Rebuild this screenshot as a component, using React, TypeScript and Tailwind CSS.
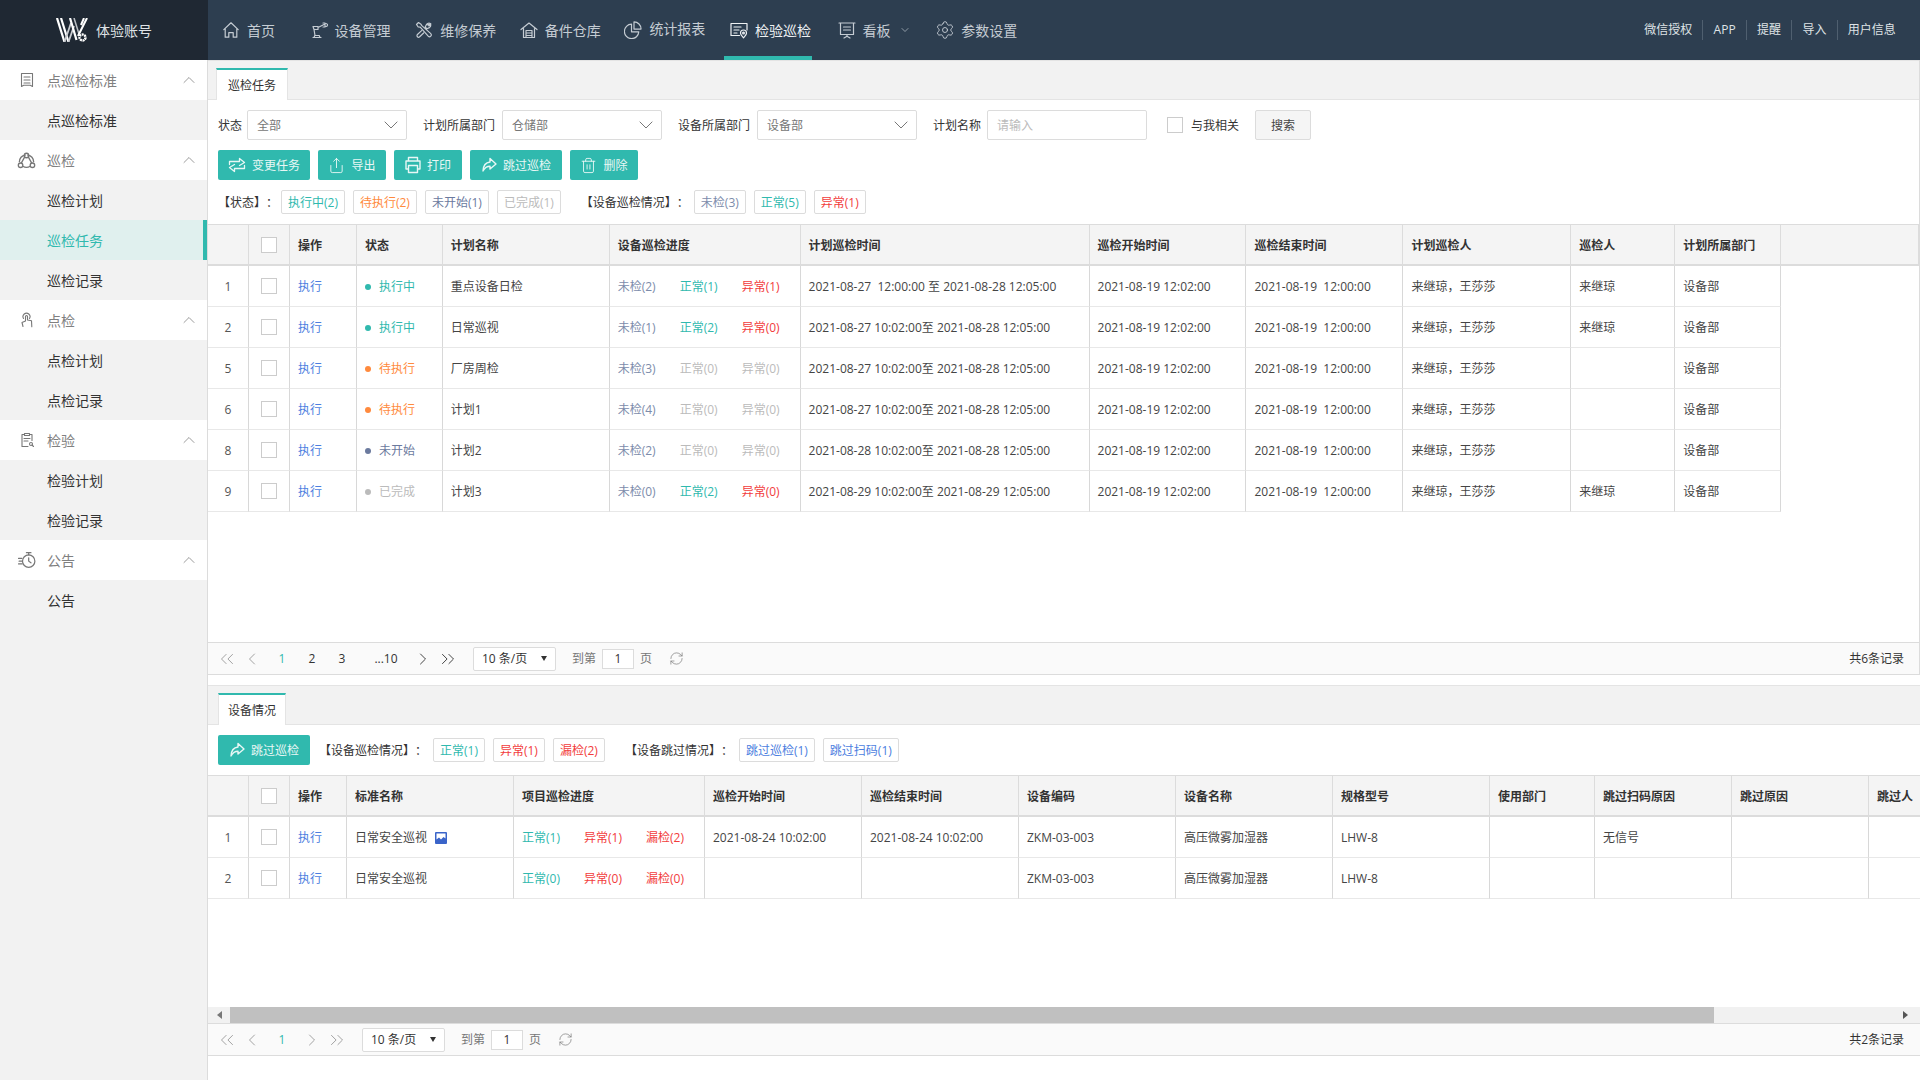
import { ChevronDown, ChevronLeft, ChevronRight, ChevronUp, ChevronsLeft, ChevronsRight, RefreshCw, Settings, Share, Trash2 } from "lucide-react";
import type { ReactNode } from "react";

const navIcon = { width: 18, height: 18, viewBox: "0 0 18 18", fill: "none", stroke: "currentColor", strokeWidth: 1.2, strokeLinejoin: "round" as const, strokeLinecap: "round" as const };
const sideIcon = { width: 16, height: 16, viewBox: "0 0 16 16", fill: "none", stroke: "#777", strokeWidth: 1.1, strokeLinejoin: "round" as const, strokeLinecap: "round" as const };

const HomeIcon = () => (
  <svg {...navIcon}><path d="M1.8 8.6 9 1.8l7.2 6.8M3.2 7.4V16.2h3.6v-4.6h4.4v4.6h3.6V7.4" /></svg>
);
const RobotIcon = () => (
  <svg {...navIcon}><path d="M2 16.5h8M3 16.5l.8-2h4.4l.8 2M4 14.5 3 8.5M2 5.5h5v3H3zM7 6.5l6-3M12 2h2v4h-2M15 2.5a2 2 0 0 1 1.5 1M15 5.5a2 2 0 0 0 1.5-1" /></svg>
);
const ToolsIcon = () => (
  <svg {...navIcon}><path d="M6 3.2 3.5 1.5 1.5 3.5l1.7 2.5 2 .2 8 9a1.8 1.8 0 0 0 2.6-2.6l-9-8zM15.8 2.7a3.4 3.4 0 0 0-4.3.8L10.2 6l1.8 1.8 2.4-1.2a3.3 3.3 0 0 0 1.4-2.9l-2 1.1-1-1zM6.6 9.6l-4.4 4.2a1.6 1.6 0 0 0 2.2 2.2L8.6 12" /></svg>
);
const StoreIcon = () => (
  <svg {...navIcon}><path d="M1 8.5 9 2l8 6.5M3.5 7.5v9h11v-9M6 9.5h6v7H6zM6 12h6M6 14.5h6" /></svg>
);
const PieIcon = () => (
  <svg {...navIcon}><path d="M7.5 3.2a7.2 7.2 0 1 0 7.3 7.6H7.5zM10 .9a7 7 0 0 1 7 7.2h-7z" /></svg>
);
const InspectIcon = () => (
  <svg {...navIcon}><path d="M17 9V2.5H1v12h8.5M4 6h7M4 9h5M4 12h3" /><path d="M13.5 16.8c-2-2.2-3-3.4-3-4.8a3 3 0 0 1 6 0c0 1.4-1 2.6-3 4.8z" /><circle cx="13.5" cy="12" r=".9" /></svg>
);
const BoardIcon = () => (
  <svg {...navIcon}><path d="M1 2h16M2.5 2v11.5h13V2M5.5 6h7M5.5 9h7M9 13.5v2M6 17l3-1.8 3 1.8" /></svg>
);

const SwapIcon = () => (
  <svg width="18" height="16" viewBox="0 0 18 16" fill="none" stroke="currentColor" strokeWidth="1.3" strokeLinejoin="round" strokeLinecap="round">
    <path d="M1.500 7.500V4.500h10V1.500l5 4-5 3" />
    <path d="M16.500 8.500v3h-10v3l-5-4 5-3" />
  </svg>
);
const PrintIcon = () => (
  <svg width="16" height="18" viewBox="0 0 16 18" fill="none" stroke="currentColor" strokeWidth="1.4" strokeLinejoin="round">
    <path d="M3.500 5V1.500h9V5M3.500 13H1V5h14v8h-2.500M3.500 9.500h9v7h-9z" />
  </svg>
);
const SkipIcon = () => (
  <svg width="16" height="16" viewBox="0 0 16 16" fill="none" stroke="currentColor" strokeWidth="1.4" strokeLinejoin="round">
    <path d="M9 1.500 15 7l-6 5V9.200c-3 0-5.200 1.300-7 4.800C2.200 9 4.500 5.500 9 5z" />
  </svg>
);

const DocSideIcon = () => (
  <svg {...sideIcon}><path d="M2.500 1.500h11v13l-2.200-1.200H4.700L2.500 14.500zM5 5h6M5 8h6M5 11h6" /></svg>
);
const TriadIcon = () => (
  <svg {...sideIcon} width="19" height="19"><circle cx="8" cy="3.800" r="1.900" /><circle cx="3" cy="12" r="1.900" /><circle cx="13" cy="12" r="1.900" /><path d="M6.500 5 3.600 10.200M9.500 5l2.900 5.200M4.900 12.800a6 6 0 0 0 6.200 0M7 3.500a6 6 0 0 0-5 5.500M9 3.500A6 6 0 0 1 14 9" /></svg>
);
const HandIcon = () => (
  <svg {...sideIcon}><path d="M4.500 6.500a3.500 3.500 0 1 1 6 0M6.500 9V4.500a1 1 0 0 1 2 0V8l4 .8.300 6M6.500 9 3 10.500l1 4" /></svg>
);
const ClipIcon = () => (
  <svg {...sideIcon}><path d="M5.500 2.500H3v12h6M10.500 2.500H13v6M5.500 1.500h5v2h-5zM5 6.500h6M5 9h4" /><circle cx="12" cy="12" r="1.500" /><path d="m13 13 1.500 1.500" /></svg>
);
const TimerIcon = () => (
  <svg {...sideIcon} width="18" height="18"><circle cx="9.500" cy="9" r="5.500" /><path d="M7.500 1.500h4M9.500 1.500v2M9.500 6v3l2 1.500M.5 6.500h3M1 9h2.500M.5 11.500h3" /></svg>
);

function Logo() {
  return (
    <svg width="32" height="24" viewBox="0 0 32 24" fill="none">
      <path d="M1 0 8.500 24M5 0l7.500 24" stroke="#fff" strokeWidth="2.200" />
      <path d="M8.500 24 15 5M12.500 24l5.500-16" stroke="#c9ccd0" strokeWidth="1.800" />
      <path d="M14 0l6.500 22" stroke="#fff" strokeWidth="2.200" />
      <path d="M18 0l5 16" stroke="#b9bdc2" strokeWidth="1.600" />
      <path d="M22 18 31 0M25 7l3-7" stroke="#fff" strokeWidth="2" />
      <circle cx="26.500" cy="19.500" r="3" fill="#1f2833" stroke="#fff" strokeWidth="2.400" strokeDasharray="2 .6" />
    </svg>
  );
}

const sideGroups: { title: string; icon: ReactNode; items: string[] }[] = [
  { title: "点巡检标准", icon: <DocSideIcon />, items: ["点巡检标准"] },
  { title: "巡检", icon: <TriadIcon />, items: ["巡检计划", "巡检任务", "巡检记录"] },
  { title: "点检", icon: <HandIcon />, items: ["点检计划", "点检记录"] },
  { title: "检验", icon: <ClipIcon />, items: ["检验计划", "检验记录"] },
  { title: "公告", icon: <TimerIcon />, items: ["公告"] },
];

function Sidebar() {
  return (
    <aside className="w-[208px] shrink-0 border-r border-[#dcdcdc] bg-[#f2f2f2]">
      {sideGroups.map((group) => (
        <div key={group.title}>
          <div className="flex h-10 items-center bg-white pr-2 text-[14px] text-[#808080]">
            <span className="flex w-[47px] justify-center pl-[6px]">{group.icon}</span>
            <span className="flex-1">{group.title}</span>
            <ChevronUp size={20} strokeWidth={1} color="#888" />
          </div>
          {group.items.map((item) =>
            item === "巡检任务" ? (
              <div key={item} className="flex h-10 items-center border-r-[4px] border-[#30b9ae] bg-[#e0f0ee] pl-[47px] text-[14px] text-[#30b9ae]">
                {item}
              </div>
            ) : (
              <div key={item} className="flex h-10 items-center pl-[47px] text-[14px] text-[#333]">
                {item}
              </div>
            )
          )}
        </div>
      ))}
    </aside>
  );
}

function Header() {
  return (
    <header className="flex h-[60px] shrink-0 bg-[#2d3e50] text-[14px] text-[#c5ccd3]">
      <div className="flex w-[208px] shrink-0 items-center gap-2 bg-[#1f2833] pl-[56px] text-[#dfe2e5]">
        <Logo />
        <span>体验账号</span>
      </div>
      <nav className="flex flex-1 items-center gap-[16.6px] whitespace-nowrap pl-2">
        <a className="flex h-[60px] w-[72px] items-center gap-[7px] pl-[6px]"><HomeIcon /><span>首页</span></a>
        <a className="flex h-[60px] w-[88px] items-center gap-[6px] pl-[6px]"><RobotIcon /><span>设备管理</span></a>
        <a className="flex h-[60px] w-[88px] items-center gap-[7px] pl-[6px]"><ToolsIcon /><span>维修保养</span></a>
        <a className="flex h-[60px] w-[88px] items-center gap-[7px] pl-[6px]"><StoreIcon /><span>备件仓库</span></a>
        <a className="flex h-[60px] w-[88px] items-center gap-[7px] pl-[6px]"><PieIcon /><span className="mb-[4px]">统计报表</span></a>
        <a className="ml-[1px] flex h-[60px] w-[88px] items-center gap-[7px] border-b-[4px] border-[#30b9ae] pl-[6px] pt-[4px] text-[#eef1f3]"><InspectIcon /><span>检验巡检</span></a>
        <a className="ml-[3px] flex h-[60px] w-[80px] items-center gap-[7px] pl-[6px]"><BoardIcon /><span>看板</span><ChevronDown size={12} strokeWidth={1.3} className="ml-[1px] shrink-0" /></a>
        <a className="flex h-[60px] w-[92px] items-center gap-[6px] pl-[7px]"><Settings size={20} strokeWidth={1.1} /><span>参数设置</span></a>
      </nav>
      <div className="flex items-center pr-[14px] text-[12px] text-[#dfe3e6]">
        <a className="flex h-5 items-center border-r border-[#4f5f6f] px-[10.200px]">微信授权</a>
        <a className="flex h-5 items-center border-r border-[#4f5f6f] px-[10.200px]">APP</a>
        <a className="flex h-5 items-center border-r border-[#4f5f6f] px-[10.200px]">提醒</a>
        <a className="flex h-5 items-center border-r border-[#4f5f6f] px-[10.200px]">导入</a>
        <a className="flex h-5 items-center px-[10.200px]">用户信息</a>
      </div>
    </header>
  );
}

function TabBar({ title, tabClass }: { title: string; tabClass: string }) {
  return (
    <div className="flex h-10 shrink-0 items-end border-b border-t border-[#e4e4e4] bg-[#f2f2f2]">
      <div className={`-mb-px flex h-8 items-center justify-center border-x border-t-2 border-x-[#e4e4e4] border-t-[#30b9ae] bg-white pt-[2px] text-[12px] text-[#333] ${tabClass}`}>
        {title}
      </div>
    </div>
  );
}

function Tag({ color, children }: { color: string; children: ReactNode }) {
  return <span className={`flex h-6 items-center rounded-[2px] border border-[#dcdcdc] px-[6px] pt-[2px] text-[12px] ${color}`}>{children}</span>;
}

function Select({ value }: { value: string }) {
  return (
    <div className="flex h-[30px] w-[160px] items-center justify-between rounded-[2px] border border-[#dcdcdc] pl-[9px] pr-2 text-[#777]">
      <span className="pt-[2px]">{value}</span>
      <svg width="14" height="8" viewBox="0 0 14 8" fill="none" stroke="#777" strokeWidth="1"><path d="m.7.7 6.300 6.300L13.300.7" /></svg>
    </div>
  );
}

function ActionButton({ w, icon, label }: { w: string; icon: ReactNode; label: string }) {
  return (
    <button className={`flex h-[30px] items-center justify-center gap-[6px] rounded-[2px] bg-[#30b9ae] text-[12px] text-[#e8f7f5] ${w}`}>
      {icon}
      <span className="pt-[2px]">{label}</span>
    </button>
  );
}

function Checkbox() {
  return <span className="block size-4 border border-[#ccc] bg-white" />;
}

const CW1 = ["w-[41px]", "w-[41px]", "w-[67px]", "w-[86px]", "w-[167px]", "w-[191px]", "w-[289px]", "w-[157px]", "w-[157px]", "w-[168px]", "w-[104px]", "w-[106px]", "w-[138px]"];
const HEAD1 = ["操作", "状态", "计划名称", "设备巡检进度", "计划巡检时间", "巡检开始时间", "巡检结束时间", "计划巡检人", "巡检人", "计划所属部门"];

type Row1 = { no: number; status: string; dot: string; text: string; name: string; un: string; ok: string; bad: string; dim?: boolean; time: string; who: string };
const rows1: Row1[] = [
  { no: 1, status: "执行中", dot: "bg-[#30b9ae]", text: "text-[#30b9ae]", name: "重点设备日检", un: "未检(2)", ok: "正常(1)", bad: "异常(1)", time: "2021-08-27  12:00:00 至 2021-08-28 12:05:00", who: "来继琼" },
  { no: 2, status: "执行中", dot: "bg-[#30b9ae]", text: "text-[#30b9ae]", name: "日常巡视", un: "未检(1)", ok: "正常(2)", bad: "异常(0)", time: "2021-08-27 10:02:00至 2021-08-28 12:05:00", who: "来继琼" },
  { no: 5, status: "待执行", dot: "bg-[#ff8a3d]", text: "text-[#ff8a3d]", name: "厂房周检", un: "未检(3)", ok: "正常(0)", bad: "异常(0)", dim: true, time: "2021-08-27 10:02:00至 2021-08-28 12:05:00", who: "" },
  { no: 6, status: "待执行", dot: "bg-[#ff8a3d]", text: "text-[#ff8a3d]", name: "计划1", un: "未检(4)", ok: "正常(0)", bad: "异常(0)", dim: true, time: "2021-08-27 10:02:00至 2021-08-28 12:05:00", who: "" },
  { no: 8, status: "未开始", dot: "bg-[#6b7a9e]", text: "text-[#6b7a9e]", name: "计划2", un: "未检(2)", ok: "正常(0)", bad: "异常(0)", dim: true, time: "2021-08-28 10:02:00至 2021-08-28 12:05:00", who: "" },
  { no: 9, status: "已完成", dot: "bg-[#bbb]", text: "text-[#bbb]", name: "计划3", un: "未检(0)", ok: "正常(2)", bad: "异常(0)", time: "2021-08-29 10:02:00至 2021-08-29 12:05:00", who: "来继琼" },
];

const thBox = "h-[41px] border-b-2 border-r border-[#dcdcdc] bg-[#f4f4f4] pl-2 text-left font-bold text-[#333]";
const th = `${thBox} pt-[2px]`;
const td = "h-[41px] border-b border-r border-b-[#e8e8e8] border-r-[#d8d8d8] pl-2 pt-[2px] text-[#444]";
const idx = "h-[41px] border-b border-r border-b-[#e8e8e8] border-r-[#d8d8d8] pt-[2px] text-center text-[#555]";
const chk = "h-[41px] border-b border-r border-b-[#e8e8e8] border-r-[#d8d8d8]";

function TaskTable() {
  return (
    <table className="table-fixed border-separate border-spacing-0 text-[12px]">
      <colgroup>{CW1.map((c, i) => <col key={i} className={c} />)}</colgroup>
      <thead>
        <tr>
          <th className={thBox} />
          <th className={thBox}><span className="flex justify-center pr-2"><Checkbox /></span></th>
          {HEAD1.map((h) => <th key={h} className={th}>{h}</th>)}
          <th className={thBox} />
        </tr>
      </thead>
      <tbody>
        {rows1.map((r) => (
          <tr key={r.no}>
            <td className={idx}>{r.no}</td>
            <td className={chk}><span className="flex justify-center"><Checkbox /></span></td>
            <td className={td}><span className="text-[#4c7ee0]">执行</span></td>
            <td className={td}>
              <span className={`flex items-center gap-[8px] ${r.text}`}><i className={`size-[6px] rounded-full ${r.dot}`} />{r.status}</span>
            </td>
            <td className={td}>{r.name}</td>
            <td className={td}>
              <span className="flex">
                <span className="w-[62px] text-[#7c8cab]">{r.un}</span>
                <span className={`w-[62px] ${r.dim ? "text-[#bbb]" : "text-[#30b9ae]"}`}>{r.ok}</span>
                <span className={r.dim ? "text-[#bbb]" : "text-[#f23c3c]"}>{r.bad}</span>
              </span>
            </td>
            <td className={`${td} whitespace-pre`}>{r.time}</td>
            <td className={td}>2021-08-19 12:02:00</td>
            <td className={`${td} whitespace-pre`}>2021-08-19  12:00:00</td>
            <td className={td}>来继琼，王莎莎</td>
            <td className={td}>{r.who}</td>
            <td className={td}>设备部</td>
          </tr>
        ))}
      </tbody>
    </table>
  );
}

const CW2 = ["w-[41px]", "w-[41px]", "w-[57px]", "w-[167px]", "w-[191px]", "w-[157px]", "w-[157px]", "w-[157px]", "w-[157px]", "w-[157px]", "w-[105px]", "w-[137px]", "w-[137px]", "w-[137px]"];
const HEAD2 = ["操作", "标准名称", "项目巡检进度", "巡检开始时间", "巡检结束时间", "设备编码", "设备名称", "规格型号", "使用部门", "跳过扫码原因", "跳过原因", "跳过人"];

function DeviceTable() {
  const rows = [
    { no: 1, img: true, a: "正常(1)", b: "异常(1)", c: "漏检(2)", t: "2021-08-24 10:02:00", why: "无信号" },
    { no: 2, img: false, a: "正常(0)", b: "异常(0)", c: "漏检(0)", t: "", why: "" },
  ];
  return (
    <table className="w-[1798px] table-fixed border-separate border-spacing-0 text-[12px]">
      <colgroup>{CW2.map((c, i) => <col key={i} className={c} />)}</colgroup>
      <thead>
        <tr>
          <th className={thBox} />
          <th className={thBox}><span className="flex justify-center pr-2"><Checkbox /></span></th>
          {HEAD2.map((h) => <th key={h} className={th}>{h}</th>)}
        </tr>
      </thead>
      <tbody>
        {rows.map((r) => (
          <tr key={r.no}>
            <td className={idx}>{r.no}</td>
            <td className={chk}><span className="flex justify-center"><Checkbox /></span></td>
            <td className={td}><span className="text-[#4c7ee0]">执行</span></td>
            <td className={td}>
              <span className="flex items-center gap-2">
                日常安全巡视
                {r.img && (
                  <svg width="12" height="12" viewBox="0 0 12 12">
                    <rect width="12" height="12" rx="1" fill="#3a64c9" />
                    <path d="M1.500 1.500h9v5l-2-1.500L6 7.500 4 5.500l-2.500 2z" fill="#fff" />
                  </svg>
                )}
              </span>
            </td>
            <td className={td}>
              <span className="flex">
                <span className="w-[62px] text-[#30b9ae]">{r.a}</span>
                <span className="w-[62px] text-[#f23c3c]">{r.b}</span>
                <span className="text-[#f23c3c]">{r.c}</span>
              </span>
            </td>
            <td className={td}>{r.t}</td>
            <td className={td}>{r.t}</td>
            <td className={td}>ZKM-03-003</td>
            <td className={td}>高压微雾加湿器</td>
            <td className={td}>LHW-8</td>
            <td className={td} />
            <td className={td}>{r.why}</td>
            <td className={td} />
            <td className={td} />
          </tr>
        ))}
      </tbody>
    </table>
  );
}

function Pager({ total, multi }: { total: string; multi: boolean }) {
  const nextColor = multi ? "#333" : "#999";
  return (
    <div className={`flex h-[33px] shrink-0 items-center border-y border-[#dcdcdc] bg-[#fafafa] pl-[6px] text-[12px] text-[#333] ${multi ? "pr-[15px]" : "pr-[16px]"}`}>
      <span className="flex w-[25px] justify-center"><ChevronsLeft size={22} strokeWidth={1} color="#999" /></span>
      <span className="flex w-[25px] justify-center"><ChevronLeft size={20} strokeWidth={1.1} color="#999" /></span>
      <span className="ml-[3px] w-[30px] text-center text-[#30b9ae]">1</span>
      {multi && <span className="w-[30px] text-center">2</span>}
      {multi && <span className="w-[30px] text-center">3</span>}
      {multi && <span className="ml-[15px] w-[28px] text-center">...10</span>}
      <span className={`flex w-[25px] justify-center ${multi ? "ml-[10px]" : "ml-[2px]"}`}><ChevronRight size={20} strokeWidth={1.1} color={nextColor} /></span>
      <span className="flex w-[25px] justify-center"><ChevronsRight size={22} strokeWidth={1} color={nextColor} /></span>
      <div className="ml-[13px] flex h-6 w-[83px] items-center justify-between rounded-[2px] border border-[#dcdcdc] bg-white pl-2 pr-2">
        <span>10 条/页</span>
        <i className="border-x-[3.500px] border-t-[5px] border-x-transparent border-t-[#333]" />
      </div>
      <span className="ml-[16px] text-[#777]">到第</span>
      <span className="ml-[6px] flex h-5 w-8 items-center justify-center border border-[#dcdcdc] bg-white">1</span>
      <span className="ml-[6px] text-[#777]">页</span>
      <RefreshCw size={15} strokeWidth={1.1} color="#777" className="ml-[17px]" />
      <span className="ml-auto">{total}</span>
    </div>
  );
}

export default function App() {
  return (
    <div className="flex h-screen w-[1920px] flex-col overflow-hidden bg-white font-['Open_Sans','Noto_Sans_CJK_SC',sans-serif] text-[12px] text-[#333] [text-spacing-trim:space-all]">
      <Header />
      <div className="flex min-h-0 flex-1">
        <Sidebar />
        <main className="flex min-w-0 flex-1 flex-col">
          {/* 巡检任务 */}
          <section className="flex h-[615px] shrink-0 flex-col border-r border-[#dcdcdc]">
            <TabBar title="巡检任务" tabClass="ml-2 w-[72px]" />
            <div className="mt-[10px] flex h-[30px] shrink-0 items-center pl-[10px] text-[12px]">
              <span className="mr-[5px] pt-[2px]">状态</span>
              <Select value="全部" />
              <span className="ml-4 mr-[7px] pt-[2px]">计划所属部门</span>
              <Select value="仓储部" />
              <span className="ml-4 mr-[7px] pt-[2px]">设备所属部门</span>
              <Select value="设备部" />
              <span className="ml-4 mr-[6px] pt-[2px]">计划名称</span>
              <div className="flex h-[30px] w-[160px] items-center rounded-[2px] border border-[#dcdcdc] pl-[9px] pt-[2px] text-[#bbb]">请输入</div>
              <span className="ml-5 mr-2"><Checkbox /></span>
              <span className="pt-[2px]">与我相关</span>
              <button className="ml-4 h-[30px] w-14 rounded-[2px] border border-[#dcdcdc] bg-[#f5f5f5] pt-[2px] text-[#444]">搜索</button>
            </div>
            <div className="mt-[10px] flex shrink-0 gap-2 pl-[10px]">
              <ActionButton w="w-[92px]" icon={<SwapIcon />} label="变更任务" />
              <ActionButton w="w-[68px]" icon={<Share size={17} strokeWidth={1.3} />} label="导出" />
              <ActionButton w="w-[68px]" icon={<PrintIcon />} label="打印" />
              <ActionButton w="w-[92px]" icon={<SkipIcon />} label="跳过巡检" />
              <ActionButton w="w-[68px]" icon={<Trash2 size={17} strokeWidth={1.3} />} label="删除" />
            </div>
            <div className="mt-[10px] flex shrink-0 items-center pl-[10px]">
              <span className="mr-[3px] pt-[2px]">【状态】：</span>
              <span className="flex gap-2">
                <Tag color="text-[#30b9ae]">执行中(2)</Tag>
                <Tag color="text-[#ff8a3d]">待执行(2)</Tag>
                <Tag color="text-[#6b7a9e]">未开始(1)</Tag>
                <Tag color="text-[#bbb]">已完成(1)</Tag>
              </span>
              <span className="ml-5 mr-[5px] pt-[2px]">【设备巡检情况】：</span>
              <span className="flex gap-2">
                <Tag color="text-[#7c8cab]">未检(3)</Tag>
                <Tag color="text-[#30b9ae]">正常(5)</Tag>
                <Tag color="text-[#f23c3c]">异常(1)</Tag>
              </span>
            </div>
            <div className="mt-[10px] min-h-0 flex-1 border-t border-[#dcdcdc]">
              <TaskTable />
            </div>
            <Pager total="共6条记录" multi />
          </section>

          <div className="h-[10px] shrink-0" />

          {/* 设备情况 */}
          <section className="flex min-h-0 flex-1 flex-col">
            <TabBar title="设备情况" tabClass="ml-[10px] w-[68px]" />
            <div className="mt-[10px] flex h-[30px] shrink-0 items-center pl-[10px]">
              <ActionButton w="w-[92px]" icon={<SkipIcon />} label="跳过巡检" />
              <span className="ml-[9px] mr-[6px] pt-[2px]">【设备巡检情况】：</span>
              <span className="flex gap-2">
                <Tag color="text-[#30b9ae]">正常(1)</Tag>
                <Tag color="text-[#f23c3c]">异常(1)</Tag>
                <Tag color="text-[#f23c3c]">漏检(2)</Tag>
              </span>
              <span className="ml-5 mr-[6px] pt-[2px]">【设备跳过情况】：</span>
              <span className="flex gap-2">
                <Tag color="text-[#4c7ee0]">跳过巡检(1)</Tag>
                <Tag color="text-[#4c7ee0]">跳过扫码(1)</Tag>
              </span>
            </div>
            <div className="mt-[10px] min-h-0 flex-1 overflow-hidden border-t border-[#dcdcdc]">
              <DeviceTable />
            </div>
            <div className="flex h-4 shrink-0 items-center bg-[#f1f1f1]">
              <span className="flex w-[22px] justify-center"><i className="border-y-[4px] border-r-[5px] border-y-transparent border-r-[#777]" /></span>
              <span className="h-4 w-[1484px] bg-[#c0c0c0]" />
              <span className="ml-auto mr-[12px]"><i className="block border-y-[4px] border-l-[5px] border-y-transparent border-l-[#555]" /></span>
            </div>
            <Pager total="共2条记录" multi={false} />
            <div className="h-6 shrink-0" />
          </section>
        </main>
      </div>
    </div>
  );
}
